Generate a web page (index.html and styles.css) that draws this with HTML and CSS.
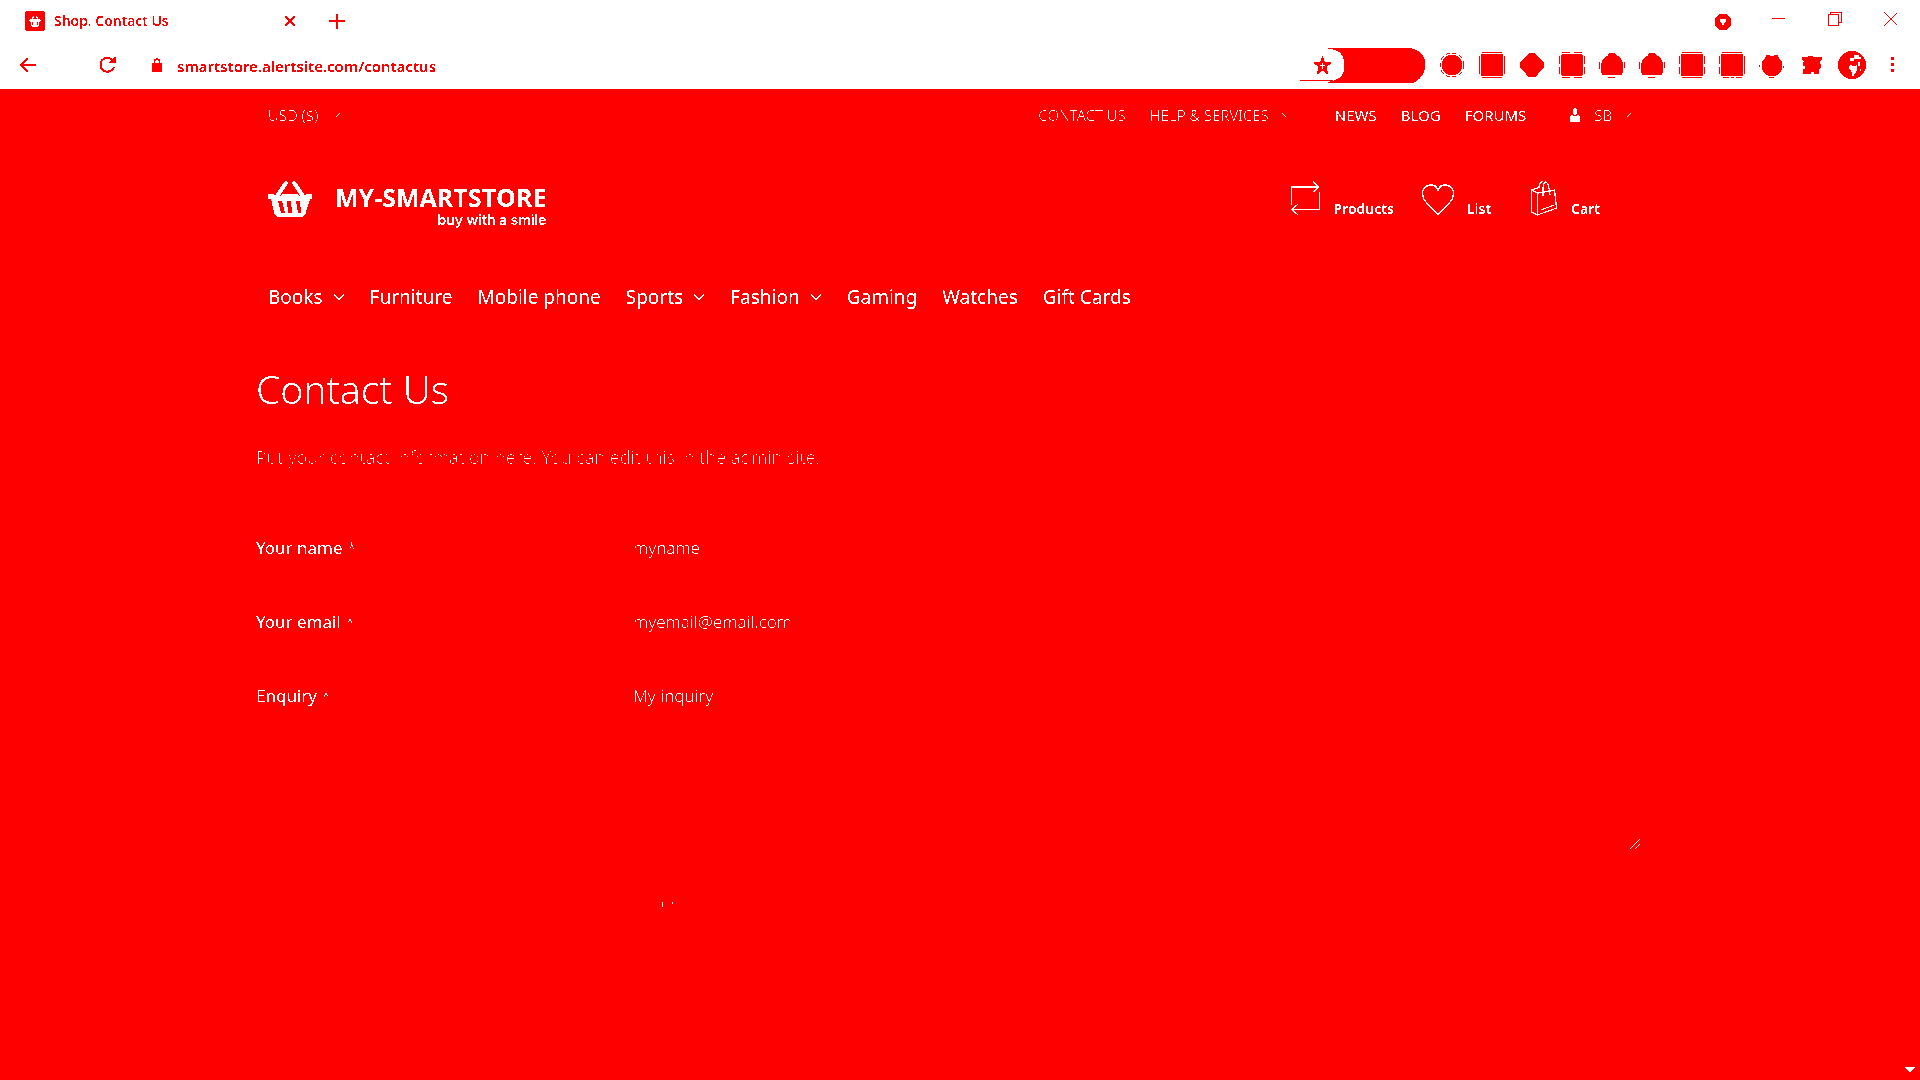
FILE: index.html
```html
<!DOCTYPE html>
<html lang="en">
<head>
<meta charset="utf-8">
<title>Shop. Contact Us</title>
<link rel="stylesheet" href="styles.css">
</head>
<body>
<svg class="defs" width="0" height="0" aria-hidden="true">
  <!-- Two-tone palette: every pixel becomes pure red or pure white -->
  <filter id="two-tone" x="0" y="0" width="100%" height="100%" color-interpolation-filters="sRGB">
    <feComponentTransfer>
      <feFuncR type="discrete" tableValues="1 1"/>
      <feFuncG type="discrete" tableValues="0 1"/>
      <feFuncB type="discrete" tableValues="0 1"/>
    </feComponentTransfer>
  </filter>
  <symbol id="chevron" viewBox="0 0 12 8"><path d="M1 1.500l5 5 5-5" fill="none" stroke="currentColor" stroke-width="1.200"/></symbol>
  <symbol id="basket" viewBox="0 0 46 38">
    <path d="M10 16L19 3M36 16L27 3" stroke="currentColor" stroke-width="4" stroke-linecap="round"/>
    <path fill="currentColor" fill-rule="evenodd" d="M1 14h5l4 4 6-4h14l6 4 4-4h5v5h-2l-4 13q-1 5-5 5H12q-4 0-5-5L4 19H1zM11 21l3 12h4l-3-12zM20 21l1 12h4l-1-12zM29 21l2 12h3l-1-12z"/>
  </symbol>
</svg>
<div class="screen">
  <header class="browser">
    <div class="tabs">
      <div class="tab">
        <svg class="favicon" viewBox="0 0 20 20"><rect width="20" height="20" rx="3" fill="currentColor"/><path d="M7 8l2-3M13 8l-2-3" stroke="#fff" stroke-width="1.400"/><path d="M4 8h12v3h-1l-1 5H6l-1-5H4zM7 11l1 3M10 11v3M13 11l-1 3" fill="#fff" stroke="currentColor" stroke-width=".9"/></svg>
        <span class="tab-title">Shop. Contact Us</span>
        <button class="icon-btn" aria-label="Close tab"><svg width="12" height="12" viewBox="0 0 12 12"><path d="M1 1l10 10M11 1L1 11" stroke="currentColor" stroke-width="2"/></svg></button>
      </div>
      <button class="icon-btn" aria-label="New tab"><svg width="16" height="16" viewBox="0 0 16 16"><path d="M8 1v15M0 8h16" stroke="currentColor" stroke-width="2"/></svg></button>
      <div class="window-controls">
        <button class="win-btn" aria-label="Search tabs"><svg width="18" height="24" viewBox="0 -6 18 24"><circle cx="9" cy="9" r="8.500" fill="currentColor"/><path d="M5 6.500h8l-4 6z" fill="#fff"/></svg></button>
        <button class="win-btn" aria-label="Minimize"><svg width="14" height="14" viewBox="0 0 14 14"><path d="M0 6.500h13" stroke="currentColor"/></svg></button>
        <button class="win-btn" aria-label="Restore"><svg width="14" height="14" viewBox="0 0 14 14"><path d="M.5 2.500h10v11H.5zM2.500 2.500V.5h11v10h-3" fill="none" stroke="currentColor"/></svg></button>
        <button class="win-btn" aria-label="Close"><svg width="14" height="14" viewBox="0 0 14 14"><path d="M.5.5l13 13M13.500.5l-13 13" stroke="currentColor" stroke-width="1.400"/></svg></button>
      </div>
    </div>
    <div class="toolbar">
      <button class="icon-btn back" aria-label="Back"><svg width="18" height="16" viewBox="0 0 18 16"><path d="M9 1L2 8l7 7M2 8h15" fill="none" stroke="currentColor" stroke-width="2"/></svg></button>
      <button class="icon-btn reload" aria-label="Reload"><svg width="18" height="18" viewBox="0 0 18 18"><path d="M15 4.500A7 7 0 1 0 16 11" fill="none" stroke="currentColor" stroke-width="2"/><path d="M17.500 0v7h-7z" fill="currentColor"/></svg></button>
      <svg class="lock" width="10" height="14" viewBox="0 0 10 14"><path d="M0 5h10v9H0z" fill="currentColor"/><path d="M2.500 5V3q0-2 2.500-2t2.500 2v2" fill="none" stroke="currentColor" stroke-width="1.600"/></svg>
      <input class="address" type="text" aria-label="Address" value="smartstore.alertsite.com/contactus">
      <button class="icon-btn bookmark" aria-label="Bookmark"><svg width="126" height="36" viewBox="0 0 126 36"><path d="M28 1h82q15 3 15 15v6q-3 10-12 14H28v-1q16-3 16-13v-8Q42 2 28 2zM0 33h33v1H0z" fill="currentColor"/><path d="M22.500 8.500l2.500 7h7L26.500 20l2 8-6-4.500-6 4.500 2-8-5.500-4.500h7z" fill="currentColor"/><path d="M22.500 16v6M20.500 18.500h4" stroke="#fff" stroke-width="1.500"/></svg></button>
      <div class="extensions">
        <button class="ext" aria-label="Extension 1"><svg viewBox="0 0 26 26"><circle cx="13" cy="13" r="10.500" fill="currentColor"/><circle cx="13" cy="13" r="12" fill="none" stroke="currentColor" stroke-dasharray="5 2"/></svg></button>
        <button class="ext" aria-label="Extension 2"><svg viewBox="0 0 26 26"><path d="M2 2h22v22H2z" fill="currentColor"/><path d="M3 .5h20M3 25.500h20M.5 4v18M25.500 4v18" stroke="currentColor"/></svg></button>
        <button class="ext" aria-label="Extension 3"><svg viewBox="0 0 26 26"><path d="M10 1h6l3 3 4 5 2 1v6l-2 1-4 5-3 3h-6l-3-3-4-5-2-1v-6l2-1 4-5z" fill="currentColor"/></svg></button>
        <button class="ext" aria-label="Extension 4"><svg viewBox="0 0 26 26"><rect x="2" y="2" width="22" height="22" rx="3" fill="currentColor"/><path d="M3 .5h8M15 .5h8M3 25.500h8M15 25.500h8M.5 4v8M25.500 4v8M.5 15v7M25.500 15v7" stroke="currentColor"/></svg></button>
        <button class="ext" aria-label="Extension 5"><svg viewBox="0 0 26 26"><path d="M10 1h6q2 3 5 4 3 4 3 8v6l-1 4H3l-1-4v-7q1-4 4-7 3-1 4-4z" fill="currentColor"/><path d="M9 25.500h7M.5 10v7M25.500 10v6" stroke="currentColor"/></svg></button>
        <button class="ext" aria-label="Extension 6"><svg viewBox="0 0 26 26"><path d="M10 1h6q2 3 5 4 3 4 3 8v6l-1 4H3l-1-4v-7q1-4 4-7 3-1 4-4z" fill="currentColor"/><path d="M9 25.500h7M.5 10v7M25.500 10v6" stroke="currentColor"/></svg></button>
        <button class="ext" aria-label="Extension 7"><svg viewBox="0 0 26 26"><rect x="2" y="2" width="22" height="22" rx="1" fill="currentColor"/><path d="M3 .5h20M3 25.500h20M.5 4v8M25.500 4v8M.5 15v7M25.500 15v7" stroke="currentColor"/></svg></button>
        <button class="ext" aria-label="Extension 8"><svg viewBox="0 0 26 26"><rect x="2" y="2" width="22" height="22" fill="currentColor"/><path d="M3 .5h20M4 25.500h6M12 25.500h3M17 25.500h6M.5 4v8M.5 15v7M25.500 4v18" stroke="currentColor"/></svg></button>
        <button class="ext" aria-label="Extension 9"><svg viewBox="0 0 26 26"><path d="M7 3h3l1 1h4l1-1h3l1 3 3 4v7l-3 5-4 2h-6l-4-2-3-5v-7l3-4z" fill="currentColor"/><path d="M.5 13v2M10 25.500h5M24.500 14v2" stroke="currentColor"/></svg></button>
        <button class="ext" aria-label="Extensions"><svg viewBox="0 0 26 26"><path d="M3 5h6V4h5v1h9v3l-2 1v3h1v3l-2 2v5h-5v-2h-3v2H4v-5h2v-3H4v-4l2-1-3-1z" fill="currentColor"/></svg></button>
        <button class="ext" aria-label="Profile"><svg class="avatar" viewBox="0 0 28 28"><circle cx="14" cy="14" r="14" fill="currentColor"/><path d="M16 5l4-1 2 4-2-1-3 1zM12 8l3-1 1 2-4 1zM13 14l3 2 3-2v5l-4 6-1-4-3-5zM20 11l2 1-1 3zM22 6l1 2M25 11v2M22 18l1 2" fill="#fff" stroke="#fff" stroke-width=".8"/></svg></button>
        <button class="ext" aria-label="Menu"><svg viewBox="0 0 26 26"><path d="M12 5h3v3h-3zM12 11h3v3h-3zM12 17h3v3h-3z" fill="currentColor"/></svg></button>
      </div>
    </div>
  </header>

  <div class="viewport">
    <div class="page">
      <div class="topbar">
        <button class="menu-btn faint">USD ($) <svg class="tiny" viewBox="0 0 6 6"><path d="M1 5l4-4" stroke="#fff" stroke-width="1"/></svg></button>
        <nav class="top-links" aria-label="Service">
          <a class="faint" href="#">CONTACT US</a>
          <button class="menu-btn faint help">HELP &amp; SERVICES <svg class="tiny" viewBox="0 0 6 6"><path d="M1 1l4 4" stroke="#fff" stroke-width="1"/></svg></button>
          <a href="#">NEWS</a>
          <a href="#">BLOG</a>
          <a href="#">FORUMS</a>
          <button class="menu-btn faint account"><svg width="10" height="14" viewBox="0 0 10 14"><path d="M0 14V9l2-2q3 2 6 0l2 2v5zM3 1h4v5L5 7 3 6z" fill="#fff"/><path d="M4 0h2v2H4z" fill="#fff"/></svg>SB <svg class="tiny" viewBox="0 0 6 6"><path d="M1 5l4-4" stroke="#fff" stroke-width="1"/></svg></button>
        </nav>
      </div>

      <div class="brandbar">
        <a class="brand" href="#">
          <svg class="brand-mark"><use href="#basket"/></svg>
          <span class="brand-text"><span class="brand-name">MY-SMARTSTORE</span><span class="tagline">buy with a smile</span></span>
        </a>
        <nav class="tools" aria-label="Shop tools">
          <a class="tool compare" href="#"><svg width="30" height="36" viewBox="0 0 30 36" fill="none" stroke="currentColor"><path d="M.5 24V6M0 6h27" stroke-width="1.600"/><path d="M22 .5l6 5.500-6 5M28.500 11v17.500H1.500M7 23l-6 5.500 6 5.500" stroke-width="1.200"/></svg><span>Products</span></a>
          <a class="tool wish" href="#"><svg width="32" height="36" viewBox="0 0 32 36" fill="none" stroke="currentColor" stroke-width="1.400"><path d="M16 33L4 21Q-1 15 1 9q3-5 8-5 5 0 7 5 2-5 7-5 5 0 8 5 2 6-3 12z"/></svg><span>List</span></a>
          <a class="tool" href="#"><svg width="28" height="36" viewBox="0 0 28 36" fill="none" stroke="currentColor" stroke-width="1.300"><path d="M1.500 9l6 3v22l-6-3zM7.500 12l17-3 2 18-19 7M1.500 9l9-3M11 29l13-5M13 15V9q0-8 3-8 3 1 4 13M9 6q1-6 4-5"/></svg><span>Cart</span></a>
        </nav>
      </div>

      <nav class="mainnav" aria-label="Categories">
        <a href="#">Books <svg class="chev"><use href="#chevron"/></svg></a>
        <a href="#">Furniture</a>
        <a href="#">Mobile phone</a>
        <a href="#">Sports <svg class="chev"><use href="#chevron"/></svg></a>
        <a href="#">Fashion <svg class="chev"><use href="#chevron"/></svg></a>
        <a href="#">Gaming</a>
        <a href="#">Watches</a>
        <a href="#">Gift Cards</a>
      </nav>

      <main>
        <h1>Contact Us</h1>
        <p class="intro">Put your contact information here. You can edit this in the admin site.</p>
        <form class="contact">
          <label for="name">Your name <span class="star">*</span></label>
          <input id="name" type="text" value="myname">
          <label for="email">Your email <span class="star">*</span></label>
          <input id="email" type="email" value="myemail@email.com">
          <label for="enquiry">Enquiry <span class="star">*</span></label>
          <div class="area">
            <textarea id="enquiry">My inquiry</textarea>
            <svg class="grip" viewBox="0 0 10 10"><path d="M0 10L10 0M5 10l5-5" stroke="#fff" stroke-width="1.300"/></svg>
          </div>
          <button class="submit" type="submit">Submit</button>
        </form>
      </main>
    </div>
    <div class="scrollbar"><svg width="10" height="5" viewBox="0 0 10 5"><path d="M0 0h10L5 5z" fill="#fff"/></svg></div>
  </div>
</div>
</body>
</html>
```
FILE: styles.css
```css
* { box-sizing: border-box; }

body {
  margin: 0;
  background: #f00;
  font-family: "Open Sans", "Noto Sans", sans-serif;
}

.defs { position: absolute; }

.screen {
  display: flex;
  flex-direction: column;
  min-height: 100vh;
  background: #f00;
  filter: url(#two-tone);
}

button, input, textarea {
  font: inherit;
  color: inherit;
  border: 0;
  padding: 0;
  margin: 0;
  background: none;
  outline: 0;
}

a { color: inherit; text-decoration: none; }
svg { flex: none; display: block; }

/* Browser frame */
.browser { background: #fff; color: #f00; }

.tabs { display: flex; align-items: center; height: 41px; padding-left: 25px; }
.tab { display: flex; align-items: center; width: 304px; }
.favicon { width: 20px; height: 20px; margin-right: 9px; }
.tab-title { flex: 1; font-size: 14px; font-weight: 600; line-height: 20px; }
.tab .icon-btn { margin-right: 33px; }
.icon-btn { display: flex; align-items: center; }
.window-controls { display: flex; margin-left: auto; padding: 0 1px 4px 0; }
.win-btn { display: flex; align-items: center; justify-content: center; width: 56px; height: 37px; }

.toolbar { display: flex; align-items: center; height: 48px; padding: 0 8px 0 19px; }
.reload { margin-left: 61px; }
.lock { margin-left: 36px; }
.address { flex: 1; margin-left: 15px; padding-top: 2px; font-family: "Noto Sans", sans-serif; font-size: 15px; font-weight: 600; }
.extensions { display: flex; margin-left: 6px; }
.ext { display: flex; align-items: center; justify-content: center; width: 40px; height: 40px; }
.ext svg { width: 26px; height: 26px; }
.ext .avatar { width: 28px; height: 28px; }

/* Shop page */
.viewport { display: flex; flex: 1; color: #fff; font-family: "Noto Sans", "Open Sans", sans-serif; }
.page { flex: 1; padding: 0 256px; }
.scrollbar { display: flex; flex-direction: column; justify-content: flex-end; align-items: center; width: 20px; padding-bottom: 8px; }

.topbar { display: flex; justify-content: space-between; align-items: center; height: 54px; padding: 0 12px 2px; font-size: 15px; }
.top-links { display: flex; align-items: center; gap: 24px; }
.menu-btn { display: flex; align-items: center; gap: 16px; }
.help { margin-right: 24px; gap: 12px; }
.account { margin-left: 20px; gap: 14px; }
.faint { font-weight: 300; color: rgba(255, 255, 255, .8); }
.chev { width: 12px; height: 8px; }
.tiny { width: 6px; height: 6px; }

.brandbar { display: flex; justify-content: space-between; align-items: center; height: 112px; padding: 0 44px 0 11px; }
.brand { display: flex; align-items: center; gap: 22px; }
.brand-mark { width: 46px; height: 38px; }
.brand-text { display: flex; flex-direction: column; align-items: flex-end; padding-top: 12px; font-family: "Open Sans", sans-serif; }
.brand-name { font-size: 25px; font-weight: 700; line-height: 30px; }
.tagline { font-family: Inter, sans-serif; font-size: 14px; font-weight: 600; line-height: 16px; }
.tools { display: flex; align-items: center; }
.tool { display: flex; align-items: flex-end; gap: 13px; font-size: 14px; font-weight: 600; line-height: 16px; }
.compare { margin-right: 28px; }
.wish { margin-right: 39px; }

.mainnav { display: flex; align-items: center; gap: 25px; height: 84px; padding: 0 12px; font-size: 19px; }
.mainnav a { display: flex; align-items: center; gap: 10px; }

h1 { margin: 22px 0 0; font-size: 39px; font-weight: 300; line-height: 56px; }
.intro { margin: 28px 0 0; font-size: 18px; font-weight: 300; line-height: 24px; color: rgba(255, 255, 255, .58); }

.contact { display: grid; grid-template-columns: 365px 1fr; row-gap: 24px; margin-top: 54px; font-size: 17px; line-height: 26px; }
.contact label { padding: 12px 0; }
.contact input, .contact textarea { width: 100%; padding: 12px; font-weight: 300; color: rgba(255, 255, 255, .8); }
.star { font-weight: 300; color: rgba(255, 255, 255, .7); }
.area { position: relative; }
.contact textarea { display: block; height: 182px; resize: none; }
.grip { position: absolute; right: 4px; bottom: 4px; width: 10px; height: 10px; }
.submit { grid-column: 2; justify-self: start; height: 52px; padding: 0 20px; font-weight: 300; color: rgba(255, 255, 255, .51); }
```
